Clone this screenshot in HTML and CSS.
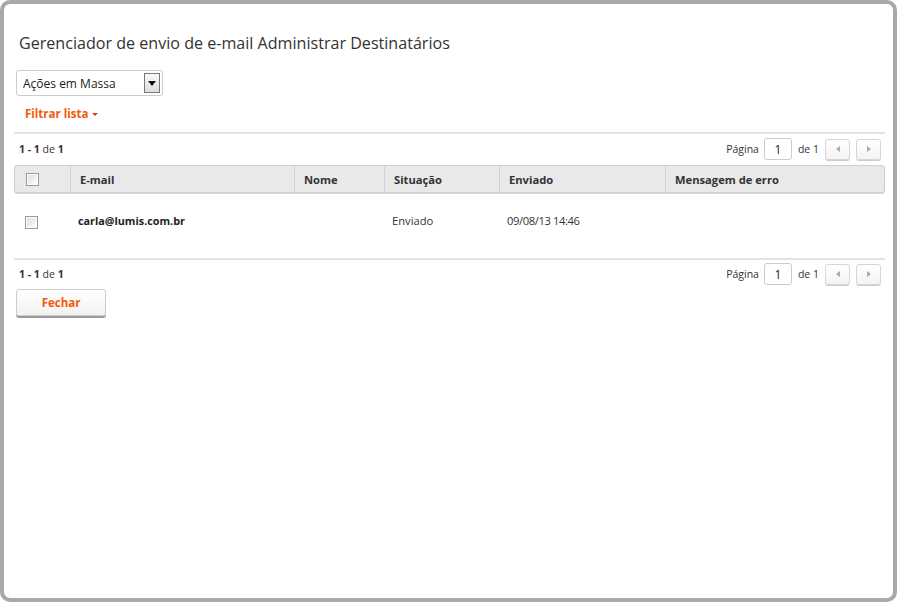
FILE: index.html
```html
<!DOCTYPE html>
<html lang="pt">
<head>
<meta charset="utf-8">
<link rel="stylesheet" href="styles.css">
</head>
<body>
<div class="frame">
  <h1 class="title">Gerenciador de envio de e-mail Administrar Destinatários</h1>
  <div class="select">
    <span class="select-label">Ações em Massa</span>
    <span class="select-btn"><svg width="8" height="5" viewBox="0 0 8 5"><path d="M0 0h8L4 5z" fill="#111"/></svg></span>
  </div>
  <div class="filter">Filtrar lista <span class="caret"></span></div>
  <div class="pager pager-top">
    <div class="count"><b>1 - 1</b> de <b>1</b></div>
    <div class="pages">
      <span>Página</span>
      <span class="page-input">1</span>
      <span>de 1</span>
      <span class="nav-btn"><svg width="4" height="6" viewBox="0 0 4 6"><path d="M4 0v6L0 3z" fill="#aaa"/></svg></span>
      <span class="nav-btn"><svg width="4" height="6" viewBox="0 0 4 6"><path d="M0 0v6l4-3z" fill="#aaa"/></svg></span>
    </div>
  </div>
  <div class="table">
    <div class="thead">
      <div class="c c0"><span class="cb"></span></div>
      <div class="c c1">E-mail</div>
      <div class="c c2">Nome</div>
      <div class="c c3">Situação</div>
      <div class="c c4">Enviado</div>
      <div class="c c5">Mensagem de erro</div>
    </div>
    <div class="trow">
      <div class="c c0"><span class="cb"></span></div>
      <div class="c c1 email">carla@lumis.com.br</div>
      <div class="c c2"></div>
      <div class="c c3">Enviado</div>
      <div class="c c4">09/08/13 14:46</div>
      <div class="c c5"></div>
    </div>
  </div>
  <div class="pager pager-bottom">
    <div class="count"><b>1 - 1</b> de <b>1</b></div>
    <div class="pages">
      <span>Página</span>
      <span class="page-input">1</span>
      <span>de 1</span>
      <span class="nav-btn"><svg width="4" height="6" viewBox="0 0 4 6"><path d="M4 0v6L0 3z" fill="#aaa"/></svg></span>
      <span class="nav-btn"><svg width="4" height="6" viewBox="0 0 4 6"><path d="M0 0v6l4-3z" fill="#aaa"/></svg></span>
    </div>
  </div>
  <div class="actions"><span class="btn">Fechar</span></div>
</div>
</body>
</html>
```
FILE: styles.css
```css
* { box-sizing: border-box; }
html, body { margin: 0; padding: 0; background: #fff; }
body { font-family: "Open Sans", "Noto Sans", sans-serif; color: #333; width: 900px; height: 605px; }
.frame {
  width: 897px; height: 602px;
  border: 4px solid #a9a9a9; border-radius: 10px;
  padding: 0 8px 0 10px;
}
.title {
  font-weight: normal; font-size: 16.1px; color: #333;
  margin: 27px 0 0 5px; line-height: 24px;
}
.select {
  margin: 15px 0 0 2px; width: 147px; height: 26px;
  border: 1px solid #ccc; border-radius: 3px;
  display: flex; align-items: center; justify-content: space-between;
  padding: 0 2px 0 6px; font-size: 12px; color: #222;
}
.select-btn {
  width: 16px; height: 20px; border: 1px solid #777; background: linear-gradient(#fafafa, #ddd);
  display: flex; align-items: center; justify-content: center;
}
.filter {
  margin: 10px 0 0 11px; color: #f15a0a; font-weight: bold; font-size: 11.5px; line-height: 16px;
  display: flex; align-items: center; gap: 4px;
}
.caret { width: 0; height: 0; border-left: 3px solid transparent; border-right: 3px solid transparent; border-top: 3px solid #e03a1a; }
.pager {
  display: flex; justify-content: space-between; align-items: flex-start;
  border-top: 2px solid #e3e3e3;
  font-size: 10.5px; color: #333; padding: 4px 4px 0 5px;
}
.count { padding-top: 4px; }
.pager-top { margin-top: 10px; height: 33px; }
.pager-bottom { margin-top: 0; height: 30px; padding-top: 3px; }
.count b { font-weight: bold; }
.pages { display: flex; align-items: center; gap: 6px; }
.pages > span:first-child { margin-right: -1px; }
.page-input {
  width: 28px; height: 22px; border: 1px solid #ccc; border-radius: 3px;
  display: flex; align-items: center; justify-content: center; font-size: 12px; color: #222;
}
.nav-btn {
  width: 25px; height: 21px; border: 1px solid #d6d6d6; border-radius: 3px;
  background: linear-gradient(#fff, #f4f4f4); box-shadow: 0 1px 0 #ccc;
  display: flex; align-items: center; justify-content: center;
}
.table { font-size: 11.2px; color: #333; }
.thead, .trow { display: flex; }
.thead {
  height: 28px; background: #e9e9e9; border: 1px solid #cfcfcf; border-radius: 3px;
  font-weight: bold; align-items: stretch; box-shadow: 0 1px 0 #d8d8d8;
}
.thead .c { display: flex; align-items: center; border-left: 1px solid #d2d2d2; padding-left: 9px; }
.thead .c0 { border-left: none; }
.trow { height: 65px; padding-top: 20px; }
.trow .c { padding-left: 9px; line-height: 16px; }
.c0 { width: 55px; padding-left: 11px !important; }
.c1 { width: 224px; }
.c2 { width: 90px; }
.c3 { width: 115px; }
.c4 { width: 166px; }
.c5 { flex: 1; }
.trow .c4 { letter-spacing: -0.4px; }
.email { font-weight: bold; color: #222; font-size: 10.8px; }
.cb {
  display: inline-block; width: 13px; height: 13px; border: 1px solid #999;
  background: linear-gradient(135deg, #ddd, #fff); box-shadow: inset 0 0 0 1px #fff; vertical-align: middle;
}
.actions { margin-top: 1px; }
.btn {
  display: inline-flex; align-items: center; justify-content: center;
  width: 90px; height: 27px; margin-left: 2px;
  border: 1px solid #ccc; border-radius: 3px; background: linear-gradient(#fff, #f2f2f2);
  box-shadow: 0 2px 0 #9a9a9a; color: #f15a0a; font-weight: bold; font-size: 11.5px;
}
```
